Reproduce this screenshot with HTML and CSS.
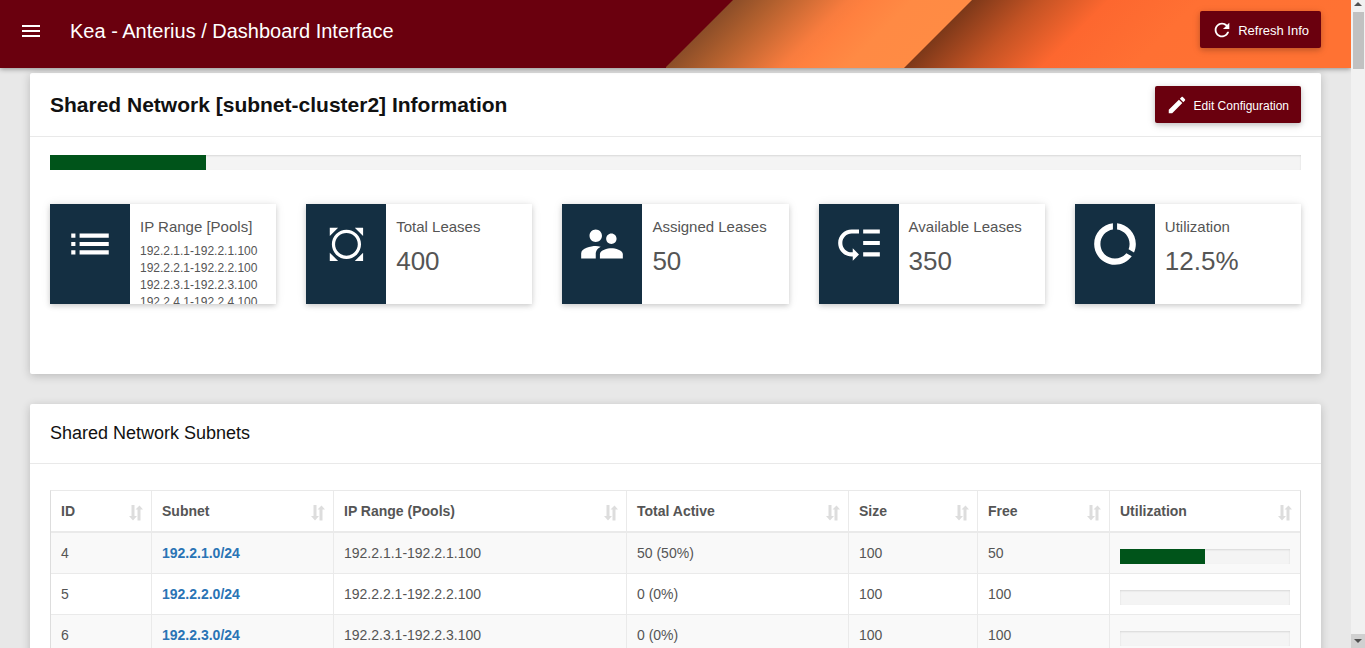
FILE: index.html
```html
<!DOCTYPE html>
<html lang="en">
<head>
<meta charset="utf-8">
<title>Kea - Anterius / Dashboard Interface</title>
<link rel="stylesheet" href="styles.css">
</head>
<body>
<svg class="defs" aria-hidden="true">
  <symbol id="sort" viewBox="0 0 14 16"><path d="M2.5 0h3v11H8l-4 4.5L0 11h2.500zM8.500 15.500h3V4.500H14L10.500 .5 6.500 4.500h2z"/></symbol>
</svg>
<div class="app">
  <header class="topbar">
    <svg class="banner" viewBox="0 0 685 68" aria-hidden="true">
      <defs>
        <linearGradient id="band1" gradientUnits="userSpaceOnUse" x1="67" y1="0" x2="187" y2="120">
          <stop offset="0" stop-color="#8a4d28"/>
          <stop offset=".18" stop-color="#b2602e"/>
          <stop offset=".48" stop-color="#f87c3e"/>
          <stop offset=".56" stop-color="#ff803f"/>
          <stop offset=".75" stop-color="#ff8a44"/>
          <stop offset="1" stop-color="#ff8b44"/>
        </linearGradient>
        <linearGradient id="band2" gradientUnits="userSpaceOnUse" x1="306" y1="0" x2="496" y2="190">
          <stop offset="0" stop-color="#7c3819"/>
          <stop offset=".18" stop-color="#c45324"/>
          <stop offset=".36" stop-color="#fd672f"/>
          <stop offset=".6" stop-color="#ff7033"/>
          <stop offset="1" stop-color="#ff7233"/>
        </linearGradient>
      </defs>
      <path fill="url(#band1)" d="M67 0H685V68H-1z"/>
      <path fill="url(#band2)" d="M306 0H685V68H238z"/>
    </svg>
    <button class="menu" type="button" aria-label="Menu">
      <svg viewBox="0 0 24 24"><path d="M3 18h18v-2H3v2zm0-5h18v-2H3v2zm0-7v2h18V6H3z"/></svg>
    </button>
    <a class="brand" href="#">Kea - Anterius / Dashboard Interface</a>
    <button class="btn btn-refresh" type="button">
      <svg viewBox="0 0 24 24"><path d="M17.650 6.350C16.200 4.900 14.210 4 12 4c-4.420 0-7.990 3.580-7.990 8s3.570 8 7.990 8c3.730 0 6.840-2.550 7.730-6h-2.080c-.82 2.330-3.040 4-5.650 4-3.310 0-6-2.690-6-6s2.690-6 6-6c1.660 0 3.140.69 4.220 1.780L13 11h7V4l-2.350 2.350z"/></svg>
      Refresh Info
    </button>
  </header>

  <main class="content">
    <section class="card card-info">
      <div class="card-head">
        <h1>Shared Network [subnet-cluster2] Information</h1>
        <button class="btn btn-edit" type="button">
          <svg viewBox="0 0 24 24"><path d="M3 17.250V21h3.750L17.810 9.940l-3.750-3.750L3 17.250zM20.710 7.040c.39-.39.39-1.020 0-1.410l-2.340-2.340c-.39-.39-1.020-.39-1.410 0l-1.830 1.830 3.750 3.750 1.830-1.830z"/></svg>
          Edit Configuration
        </button>
      </div>
      <div class="card-body">
        <div class="progress" role="progressbar" aria-label="Shared network utilization" aria-valuenow="12.5"><div class="bar" style="width:12.5%"></div></div>
        <div class="stats">
          <article class="stat">
            <div class="stat-icon"><svg viewBox="0 0 24 24"><path d="M3 13h2v-2H3v2zm0 4h2v-2H3v2zm0-8h2V7H3v2zm4 4h14v-2H7v2zm0 4h14v-2H7v2zM7 7v2h14V7H7z"/></svg></div>
            <div class="stat-text">
              <h2>IP Range [Pools]</h2>
              <div class="pools">192.2.1.1-192.2.1.100<br>192.2.2.1-192.2.2.100<br>192.2.3.1-192.2.3.100<br>192.2.4.1-192.2.4.100</div>
            </div>
          </article>
          <article class="stat">
            <div class="stat-icon"><svg viewBox="0 0 24 24"><path d="M16.210 4.160l4 4v-4zm4 12l-4 4h4zm-12 4l-4-4v4zm-4-12l4-4h-4zm12.950-.95c-2.730-2.730-7.170-2.730-9.900 0s-2.730 7.170 0 9.900 7.170 2.730 9.900 0 2.730-7.160 0-9.900zm-1.100 8.800c-2.130 2.130-5.570 2.130-7.700 0s-2.130-5.570 0-7.700 5.570-2.130 7.700 0 2.130 5.570 0 7.700z"/></svg></div>
            <div class="stat-text"><h2>Total Leases</h2><div class="value">400</div></div>
          </article>
          <article class="stat">
            <div class="stat-icon"><svg viewBox="0 0 24 24"><path d="M16.500 12c1.380 0 2.490-1.120 2.490-2.500S17.880 7 16.500 7C15.120 7 14 8.120 14 9.500s1.120 2.500 2.500 2.500zM9 11c1.660 0 2.990-1.340 2.990-3S10.660 5 9 5C7.340 5 6 6.340 6 8s1.340 3 3 3zm7.500 3c-1.830 0-5.500.92-5.500 2.750V19h11v-2.250c0-1.830-3.670-2.750-5.500-2.750zM9 13c-2.330 0-7 1.170-7 3.500V19h7v-2.250c0-.85.33-2.340 2.370-3.470C10.500 13.100 9.660 13 9 13z"/></svg></div>
            <div class="stat-text"><h2>Assigned Leases</h2><div class="value">50</div></div>
          </article>
          <article class="stat">
            <div class="stat-icon"><svg viewBox="0 0 24 24"><path d="M14 5h8v2h-8zm0 5.500h8v2h-8zm0 5.500h8v2h-8zM2 11.500C2 15.080 4.920 18 8.500 18H9v2l3-3-3-3v2h-.5C6.020 16 4 13.980 4 11.500S6.020 7 8.500 7H12V5H8.500C4.920 5 2 7.920 2 11.500z"/></svg></div>
            <div class="stat-text"><h2>Available Leases</h2><div class="value">350</div></div>
          </article>
          <article class="stat">
            <div class="stat-icon"><svg viewBox="0 0 24 24"><path d="M13 2.050v3.030c3.390.49 6 3.390 6 6.920 0 .9-.18 1.750-.48 2.540l2.600 1.530c.56-1.240.88-2.620.88-4.070 0-5.180-3.950-9.450-9-9.950zM12 19c-3.870 0-7-3.130-7-7 0-3.530 2.610-6.430 6-6.920V2.050c-5.060.5-9 4.760-9 9.950 0 5.520 4.470 10 9.990 10 3.310 0 6.240-1.610 8.060-4.090l-2.600-1.530C16.170 17.980 14.210 19 12 19z"/></svg></div>
            <div class="stat-text"><h2>Utilization</h2><div class="value">12.5%</div></div>
          </article>
        </div>
      </div>
    </section>

    <section class="card">
      <div class="card-head card-head-small"><h2>Shared Network Subnets</h2></div>
      <div class="table-body">
        <table class="subnets">
          <colgroup><col class="c-id"><col class="c-subnet"><col class="c-range"><col class="c-active"><col class="c-size"><col class="c-free"><col class="c-util"></colgroup>
          <thead>
            <tr>
              <th><button class="sort" type="button">ID<svg><use href="#sort"/></svg></button></th>
              <th><button class="sort" type="button">Subnet<svg><use href="#sort"/></svg></button></th>
              <th><button class="sort" type="button">IP Range (Pools)<svg><use href="#sort"/></svg></button></th>
              <th><button class="sort" type="button">Total Active<svg><use href="#sort"/></svg></button></th>
              <th><button class="sort" type="button">Size<svg><use href="#sort"/></svg></button></th>
              <th><button class="sort" type="button">Free<svg><use href="#sort"/></svg></button></th>
              <th><button class="sort" type="button">Utilization<svg><use href="#sort"/></svg></button></th>
            </tr>
          </thead>
          <tbody>
            <tr><td>4</td><td><a href="#">192.2.1.0/24</a></td><td>192.2.1.1-192.2.1.100</td><td>50 (50%)</td><td>100</td><td>50</td><td class="util"><div class="progress" role="progressbar" aria-label="Utilization" aria-valuenow="50"><div class="bar" style="width:50%"></div></div></td></tr>
            <tr><td>5</td><td><a href="#">192.2.2.0/24</a></td><td>192.2.2.1-192.2.2.100</td><td>0 (0%)</td><td>100</td><td>100</td><td class="util"><div class="progress" role="progressbar" aria-label="Utilization" aria-valuenow="0"></div></td></tr>
            <tr><td>6</td><td><a href="#">192.2.3.0/24</a></td><td>192.2.3.1-192.2.3.100</td><td>0 (0%)</td><td>100</td><td>100</td><td class="util"><div class="progress" role="progressbar" aria-label="Utilization" aria-valuenow="0"></div></td></tr>
          </tbody>
        </table>
      </div>
    </section>
  </main>
</div>
<div class="scrollbar" aria-hidden="true">
  <div class="arrow arrow-up"><svg viewBox="0 0 8 4"><path d="M0 4L4 0l4 4z"/></svg></div>
  <div class="thumb"></div>
  <div class="arrow arrow-down"><svg viewBox="0 0 8 4"><path d="M0 0l4 4 4-4z"/></svg></div>
</div>
</body>
</html>
```

FILE: styles.css
```css
* { box-sizing: border-box; }

body {
  margin: 0;
  height: 100vh;
  display: flex;
  overflow: hidden;
  background: #e8e8e8;
  color: #555;
  font-family: "Liberation Sans", Arial, sans-serif;
  font-size: 14px;
  line-height: 20px;
}

h1, h2 { margin: 0; }
button { font-family: inherit; border: 0; cursor: pointer; }
svg { display: block; fill: currentColor; flex: none; }
.defs { display: none; }

.app { flex: 1; min-width: 0; overflow: hidden; }

/* Top bar */
.topbar {
  position: relative;
  z-index: 1;
  height: 68px;
  padding: 11px 30px 20px 19px;
  display: flex;
  align-items: center;
  background: #6a000e;
  box-shadow: 0 1px 5px rgba(0, 0, 0, .4);
  color: #fff;
}
.banner { position: absolute; top: 0; right: 0; width: 685px; height: 68px; }
.menu { padding: 2px 0 0; background: none; color: #fff; }
.menu svg { width: 24px; height: 24px; }
.brand {
  flex: 1;
  margin-left: 27px;
  padding-top: 2px;
  color: #fff;
  font-size: 20px;
  line-height: 24px;
  text-decoration: none;
}

.btn {
  position: relative;
  height: 37px;
  padding: 2px 12px 0 11px;
  display: flex;
  align-items: center;
  gap: 5px;
  border-radius: 2px;
  background: #6a000e;
  box-shadow: 0 2px 5px rgba(0, 0, 0, .16), 0 2px 10px rgba(0, 0, 0, .12);
  color: #fff;
  white-space: nowrap;
}
.btn svg { width: 22px; height: 22px; margin-bottom: 1px; }
.btn-refresh { font-size: 13px; }
.btn-edit { gap: 6px; font-size: 12px; }

/* Cards */
.content { padding: 5px 30px; }
.card {
  margin-bottom: 30px;
  border-radius: 2px;
  background: #fff;
  box-shadow: 0 2px 10px rgba(0, 0, 0, .2);
}
.card-head {
  height: 64px;
  padding: 0 20px;
  display: flex;
  align-items: center;
  justify-content: space-between;
  border-bottom: 1px solid #e9e9e9;
  color: #111;
}
.card-head h1 { font-size: 21px; line-height: 24px; }
.card-head-small { height: 60px; padding-bottom: 2px; }
.card-head-small h2 { font-size: 18px; font-weight: 400; }
.card-body { padding: 18px 20px 70px; }

.progress {
  height: 15px;
  background: #f4f4f4;
  box-shadow: inset 0 1px 2px rgba(0, 0, 0, .12);
}
.bar { height: 100%; background: #00541a; }

/* Statistics */
.stats {
  margin-top: 34px;
  display: grid;
  grid-template-columns: repeat(5, 1fr);
  gap: 30px;
}
.stat {
  height: 100px;
  display: flex;
  overflow: hidden;
  background: #fff;
  box-shadow: 0 2px 5px rgba(0, 0, 0, .16), 0 0 10px rgba(0, 0, 0, .08);
}
.stat-icon {
  flex: none;
  width: 80px;
  padding: 15px;
  background: #142f42;
  color: #fff;
}
.stat-icon svg { width: 50px; height: 50px; }
.stat-text { padding: 13px 10px 0; }
.stat-text h2 { font-size: 15px; font-weight: 400; line-height: 20px; }
.pools { margin-top: 6px; font-size: 12px; line-height: 17px; }
.value { margin-top: 9px; font-size: 26px; line-height: 30px; }

/* Subnet table */
.table-body { padding: 26px 20px; }
.subnets {
  width: 100%;
  table-layout: fixed;
  border-collapse: separate;
  border-spacing: 0;
  border: 1px solid #ddd;
  border-top-color: #e9e9e9;
  border-bottom: 0;
}
.c-id { width: 101px; }
.c-subnet { width: 182px; }
.c-range { width: 293px; }
.c-active { width: 222px; }
.c-size { width: 129px; }
.c-free { width: 132px; }
.c-util { width: 190px; }
.subnets th, .subnets td {
  border-right: 1px solid #eaeaea;
  border-bottom: 1px solid #eaeaea;
  text-align: left;
}
.subnets th:last-child, .subnets td:last-child { border-right: 0; }
.subnets th { padding: 0; border-bottom-width: 2px; }
.subnets td { padding: 10px; }
.subnets td.util { padding: 16px 10px 9px; }
.subnets tbody tr:nth-child(odd) { background: #f9f9f9; }
.subnets a { color: #2a74b5; font-weight: 700; text-decoration: none; }
.sort {
  width: 100%;
  height: 40px;
  padding: 0 8px 0 10px;
  display: flex;
  align-items: center;
  justify-content: space-between;
  background: none;
  color: #555;
  font-size: 14px;
  font-weight: 700;
}
.sort svg { width: 14px; height: 16px; margin-top: 4px; color: #ddd; }

/* Scroll track */
.scrollbar {
  flex: none;
  width: 14px;
  display: flex;
  flex-direction: column;
  background: #f1f1f1;
  color: #505050;
}
.arrow { display: flex; align-items: center; justify-content: center; }
.arrow svg { width: 8px; height: 4px; }
.arrow-up { height: 12px; padding-bottom: 4px; }
.thumb { height: 57px; margin: 0 1px 0 2px; background: #c1c1c1; }
.arrow-down { height: 14px; margin-top: auto; background: #d0d0d0; }
```
